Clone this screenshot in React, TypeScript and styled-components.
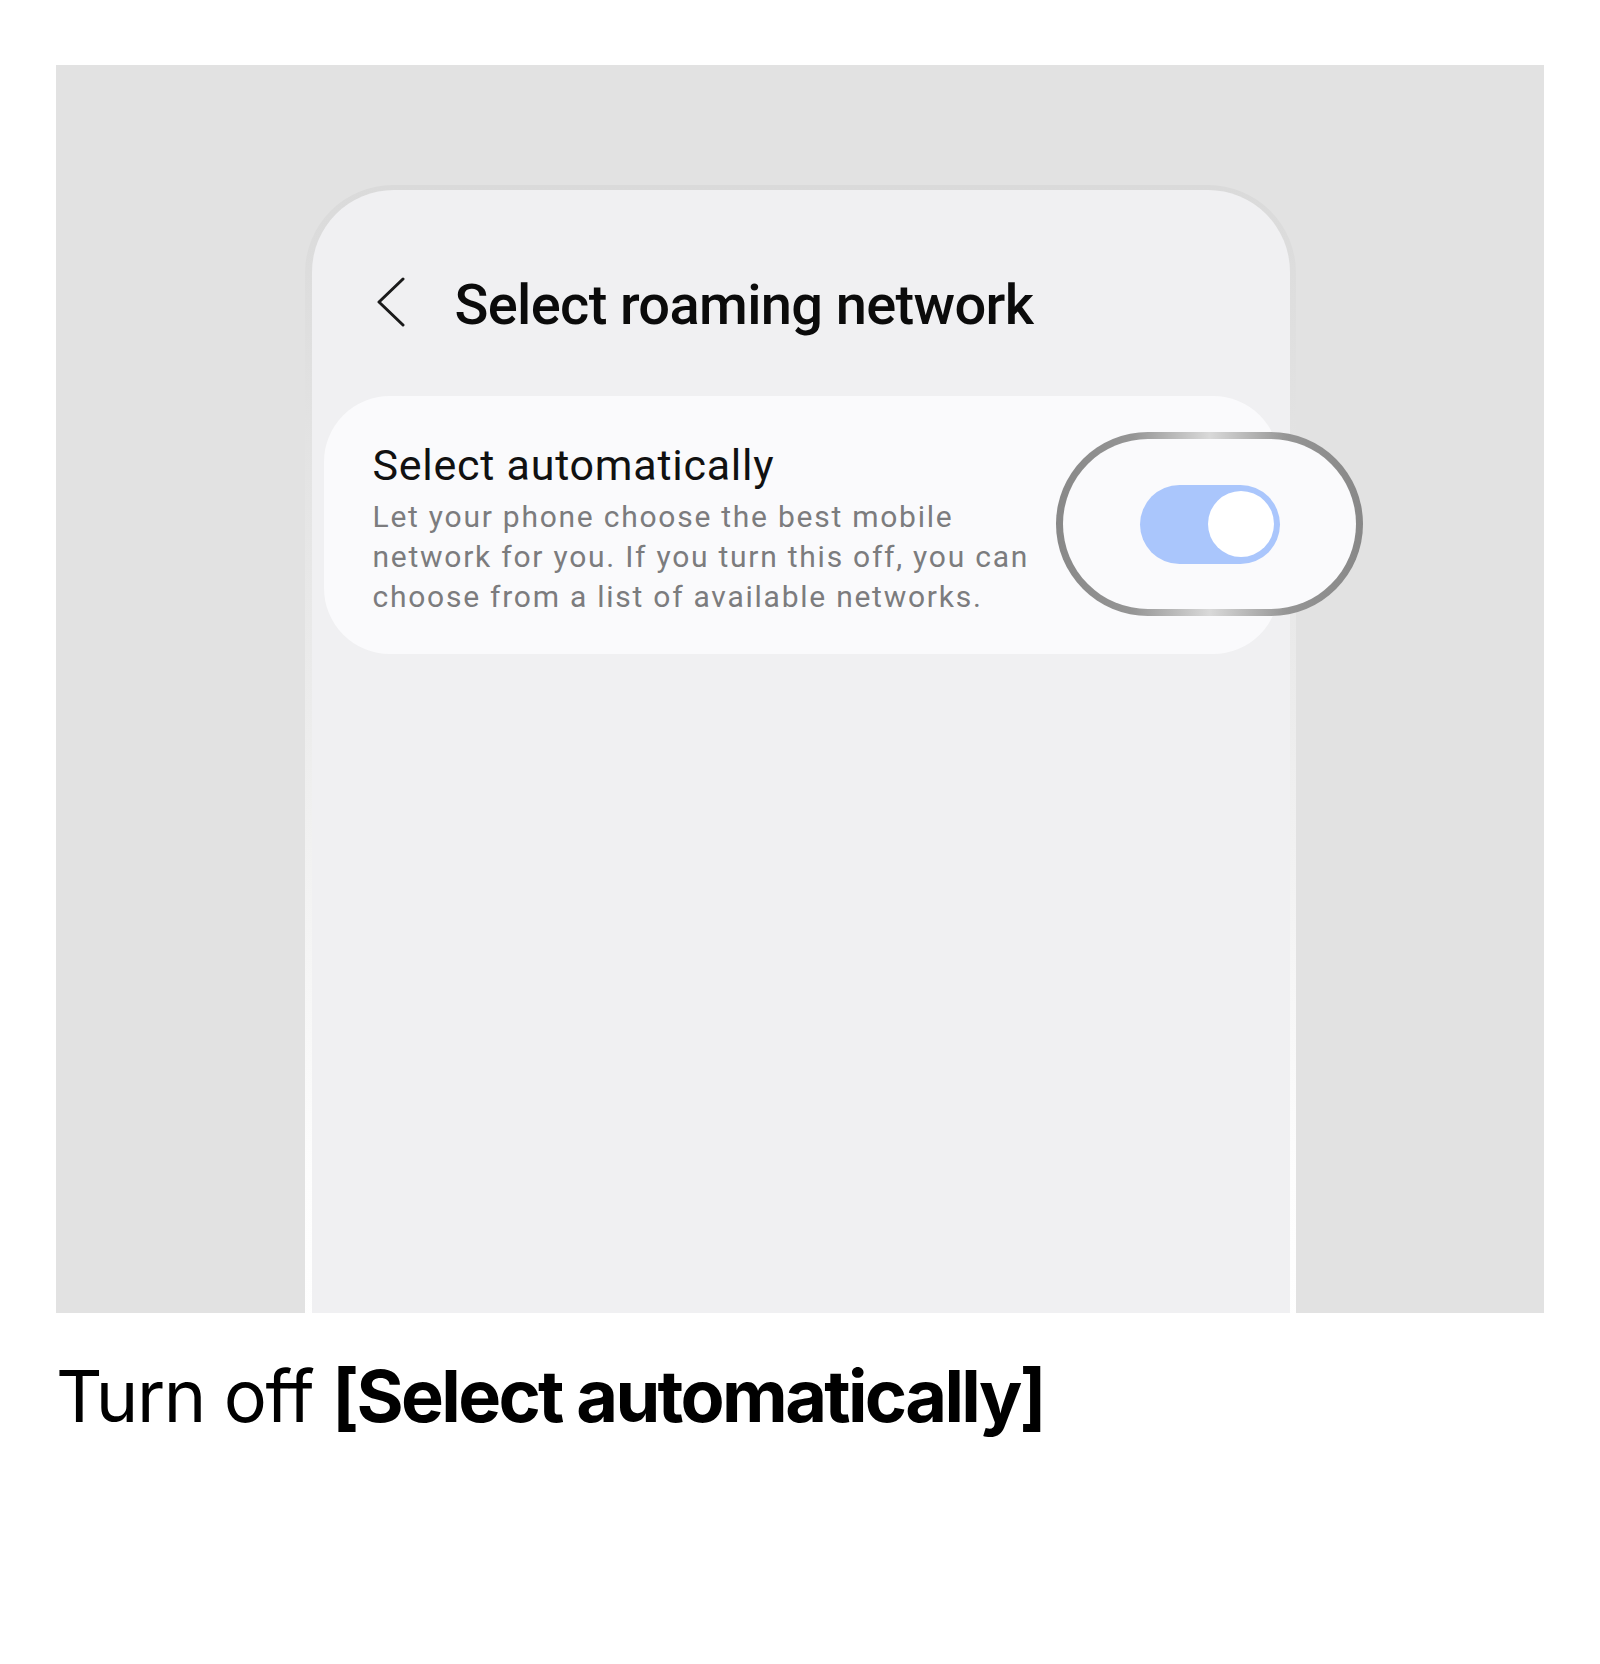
import React from "react";
import styled, { createGlobalStyle } from "styled-components";

const GlobalStyle = createGlobalStyle`
  html, body {
    margin: 0;
    padding: 0;
    background: #ffffff;
  }
  body {
    font-family: "Roboto", "Noto Sans", sans-serif;
  }
`;

const Page = styled.div`
  width: 1600px;
  height: 1664px;
  background: #ffffff;
  padding-top: 65px;
  box-sizing: border-box;
`;

const Stage = styled.div`
  margin-left: 56px;
  width: 1488px;
  height: 1248px;
  background: #e2e2e2;
  overflow: hidden;
  display: flex;
  justify-content: center;
  padding-top: 120px;
  box-sizing: border-box;
`;

const PhoneFrame = styled.div`
  width: 991px;
  height: 1160px;
  flex: none;
  box-sizing: border-box;
  padding: 5px 6px 0 7px;
  border-radius: 88px 88px 0 0;
  background: linear-gradient(180deg, #dadada 0%, #ececec 45%, #fdfdfd 85%, #ffffff 100%);
`;

const Screen = styled.div`
  height: 100%;
  border-radius: 82px 82px 0 0;
  background: #f0f0f2;
  display: flex;
  flex-direction: column;
  padding: 0 11px 0 12px;
  box-sizing: border-box;
`;

const Header = styled.div`
  display: flex;
  align-items: center;
  height: 67px;
  margin-top: 80px;
  padding-left: 53px;
  gap: 50px;
`;

const BackIcon = styled.svg`
  width: 28px;
  height: 50px;
  flex: none;
  margin-top: -4px;
`;

const Title = styled.h1`
  margin: 0;
  padding-top: 3px;
  font-family: "Roboto", "Noto Sans", sans-serif;
  font-weight: 500;
  font-size: 56px;
  line-height: 67px;
  color: #0b0b0b;
  letter-spacing: -0.65px;
`;

const Card = styled.div`
  position: relative;
  margin-top: 59px;
  height: 258px;
  box-sizing: border-box;
  border-radius: 66px;
  background: #fafafc;
  padding: 43px 0 0 49px;
`;

const ItemTitle = styled.div`
  font-family: "Roboto", "Noto Sans", sans-serif;
  font-weight: 400;
  font-size: 43px;
  line-height: 52px;
  color: #111111;
  letter-spacing: 0.75px;
`;

const ItemDesc = styled.div`
  margin-top: 6px;
  width: 680px;
  font-family: "Roboto", "Noto Sans", sans-serif;
  font-weight: 400;
  font-size: 30px;
  line-height: 40px;
  color: #7c7c7e;
  letter-spacing: 1.75px;
`;

const Magnifier = styled.div`
  position: absolute;
  left: 732px;
  top: 36px;
  width: 307px;
  height: 184px;
  box-sizing: border-box;
  border-radius: 999px;
  border: 7px solid transparent;
  background:
    linear-gradient(#fafafc, #fafafc) padding-box,
    linear-gradient(90deg, #888888 0%, #959595 25%, #d9d9d9 50%, #959595 75%, #888888 100%) border-box;
  display: flex;
  align-items: center;
  justify-content: center;
`;

const Track = styled.div<{ $on: boolean }>`
  width: 140px;
  height: 79px;
  border-radius: 40px;
  background: ${(p) => (p.$on ? "#aac6fc" : "#c8c8cc")};
  display: flex;
  align-items: center;
  justify-content: ${(p) => (p.$on ? "flex-end" : "flex-start")};
  padding: 0 6px;
  box-sizing: border-box;
  margin-left: 1px;
`;

const Knob = styled.div`
  width: 66px;
  height: 66px;
  border-radius: 50%;
  background: #ffffff;
`;

const Caption = styled.p`
  margin: 40px 0 0 56px;
  font-family: "Inter", "Liberation Sans", sans-serif;
  font-size: 72px;
  line-height: 86px;
  font-weight: 400;
  color: #000000;
  letter-spacing: -1.4px;
`;

const Strong = styled.strong`
  font-weight: 700;
  letter-spacing: -2.65px;
`;

export default function App() {
  return (
    <>
      <GlobalStyle />
      <Page>
        <Stage>
          <PhoneFrame>
            <Screen>
              <Header>
                <BackIcon viewBox="0 0 28 50" fill="none">
                  <polyline
                    points="26,2 2,25 26,48"
                    stroke="#1a1a1a"
                    strokeWidth="3"
                    strokeLinecap="round"
                    strokeLinejoin="round"
                  />
                </BackIcon>
                <Title>Select roaming network</Title>
              </Header>
              <Card>
                <ItemTitle>Select automatically</ItemTitle>
                <ItemDesc>
                  Let your phone choose the best mobile network for you. If you turn this off, you can
                  choose from a list of available networks.
                </ItemDesc>
                <Magnifier>
                  <Track $on>
                    <Knob />
                  </Track>
                </Magnifier>
              </Card>
            </Screen>
          </PhoneFrame>
        </Stage>
        <Caption>
          Turn off <Strong>[Select automatically]</Strong>
        </Caption>
      </Page>
    </>
  );
}
